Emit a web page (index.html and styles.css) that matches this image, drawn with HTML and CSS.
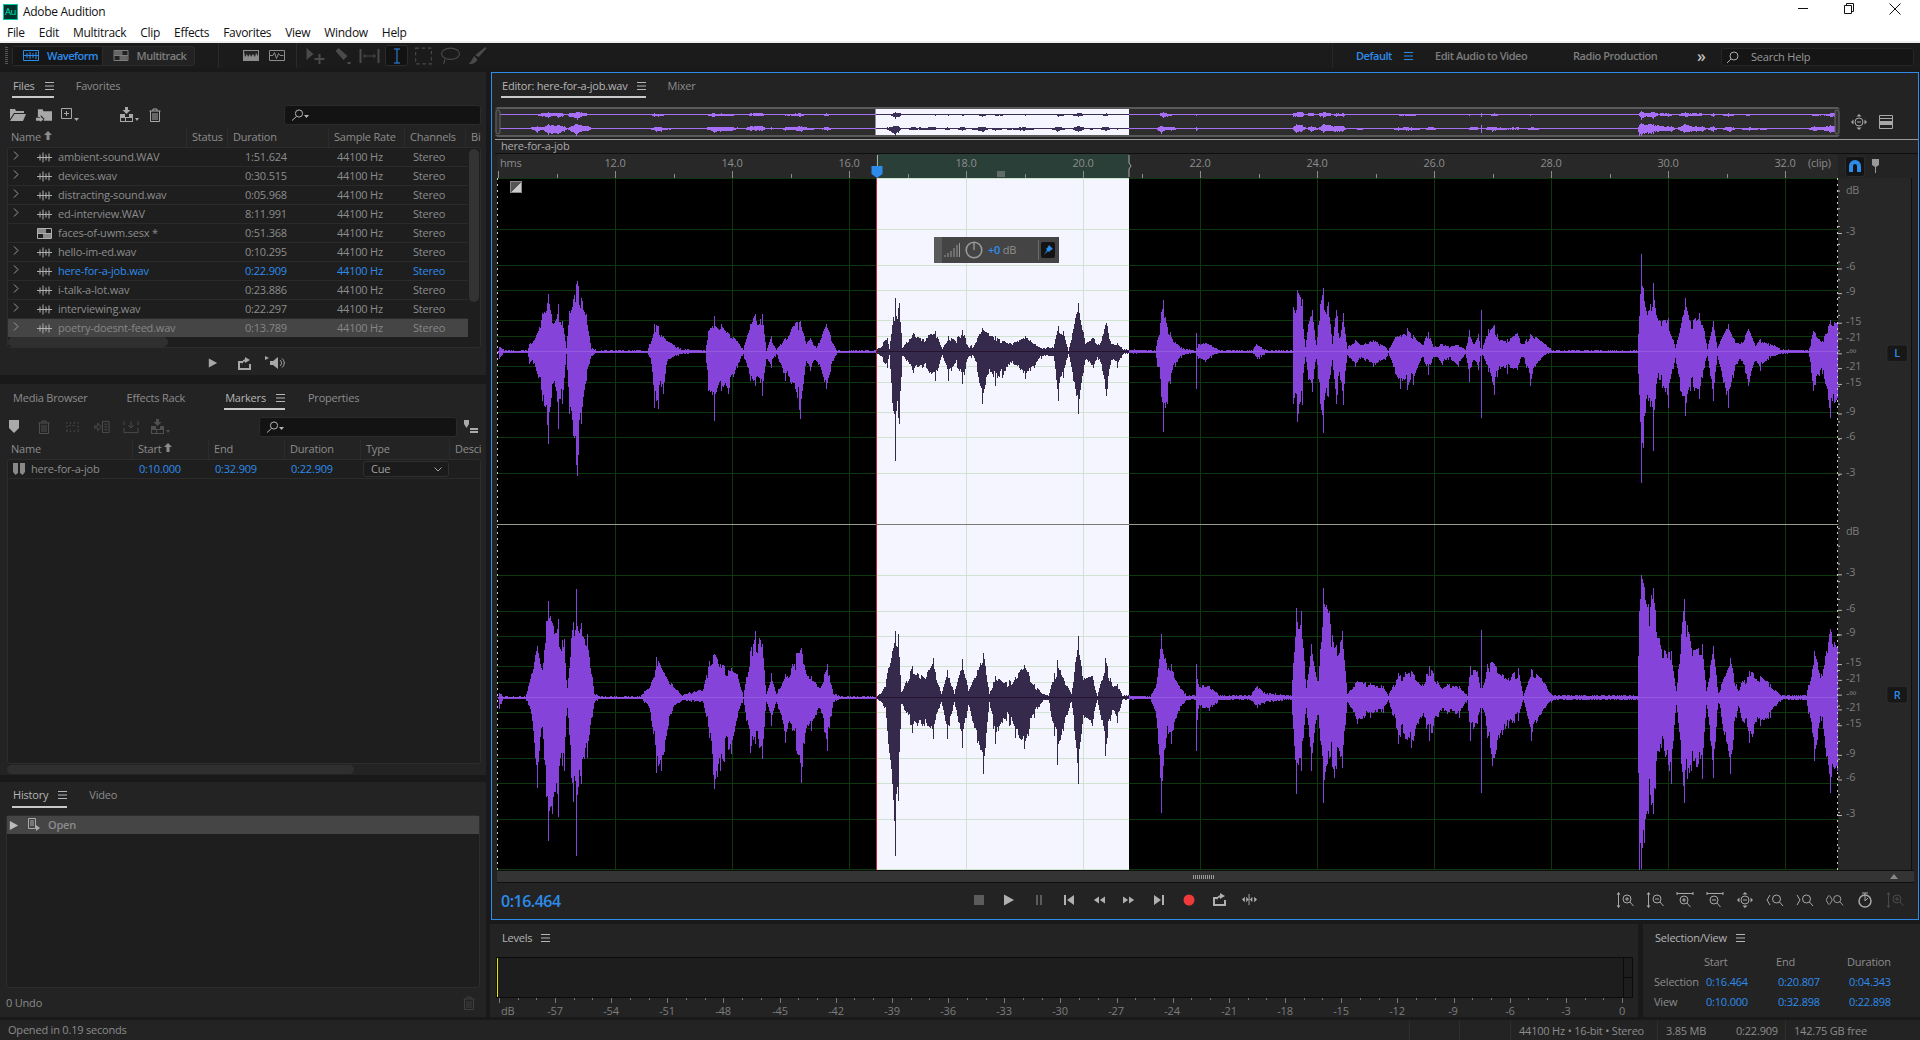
FILE: index.html
```html
<!DOCTYPE html>
<html lang="en">
<head>
<meta charset="utf-8">
<title>Adobe Audition</title>
<link rel="stylesheet" href="styles.css">
</head>
<body>
<svg class="defs" width="0" height="0" aria-hidden="true">
  <symbol id="i-wave" viewBox="0 0 15 11"><path d="M0 5.5h15M3 2.5v6M6 .5v10M9 2.5v6M12 1.5v8" fill="none" stroke="currentColor"/></symbol>
  <symbol id="i-session" viewBox="0 0 15 11"><path d="M.5 .5h14v10H.5zM.5 5.5h14" fill="none" stroke="currentColor"/><path d="M1 1h8v4H1zM6 6h8v4H6z" fill="currentColor" opacity=".75"/></symbol>
  <symbol id="i-chev" viewBox="0 0 6 9"><path d="M1 .5l4 4-4 4" fill="none" stroke="currentColor"/></symbol>
  <symbol id="i-menu" viewBox="0 0 9 8"><path d="M0 .5h9M0 4h9M0 7.5h9" stroke="currentColor" fill="none"/></symbol>
  <symbol id="i-up" viewBox="0 0 8 9"><path d="M4 0l4 4H5.5v5h-3V4H0z" fill="currentColor"/></symbol>
  <symbol id="i-search" viewBox="0 0 18 12"><circle cx="8" cy="4.5" r="3.6" fill="none" stroke="currentColor"/><path d="M5.5 7.5L1 11.5" stroke="currentColor" fill="none"/><path d="M13 6h5l-2.500 3z" fill="currentColor"/></symbol>
  <symbol id="i-folder" viewBox="0 0 16 14"><path d="M0 1h5l1 2h8v2H4L0 11zM4.500 6H16l-3 7H0z" fill="currentColor"/></symbol>
  <symbol id="i-import" viewBox="0 0 17 14"><path d="M2 1h5l1 2h9v10H8l1-2-4-4v2H2z" fill="currentColor"/><path d="M0 10h4V8l4 3.500L4 15v-2H0z" fill="currentColor"/></symbol>
  <symbol id="i-new" viewBox="0 0 18 14"><path d="M.5 .5h10v10H.5zM5.500 3v5M3 5.500h5" fill="none" stroke="currentColor"/><path d="M13 10h5l-2.500 3z" fill="currentColor"/></symbol>
  <symbol id="i-tomt" viewBox="0 0 20 16"><path d="M6 0h3v3h2.500L7.500 7l-4-4H6zM1 7h5v3h4V7h4v8H1zM2 11h4v3H2zM7 11h6v3H7z" fill="currentColor" fill-rule="evenodd"/><path d="M16 11h4l-2 3z" fill="currentColor"/></symbol>
  <symbol id="i-trash" viewBox="0 0 12 14"><path d="M.5 3h11M4 3V1h4v2M1.500 3v10.500h9V3M4 5v7M6 5v7M8 5v7" fill="none" stroke="currentColor"/></symbol>
  <symbol id="i-play" viewBox="0 0 12 12"><path d="M1 .5L11 6 1 11.500z" fill="currentColor"/></symbol>
  <symbol id="i-out" viewBox="0 0 15 13"><path d="M1 4h5v2H3v5h9V7h2v6H1z" fill="currentColor"/><path d="M8 0l5 3-5 3V4.500C6 4.500 5 6 5 8c-.5-3 .5-5.500 3-5.500z" fill="currentColor"/></symbol>
  <symbol id="i-speak" viewBox="0 0 21 14"><path d="M0 0l4 2-4 2zM5 5h3l5-4v12l-5-4H5z" fill="currentColor"/><path d="M15 4c2 2 2 4 0 6M17 2.500c3 3 3 6 0 9" fill="none" stroke="currentColor"/></symbol>
  <symbol id="i-pin" viewBox="0 0 11 14"><path d="M0 0h10v8l-5 5-5-5z" fill="currentColor"/></symbol>
  <symbol id="i-mk2" viewBox="0 0 14 14"><path d="M1 1v2M5 1v2M9 1v2M13 1v2M1 5v2M1 9v3M13 5v2M13 9v3M5 10v2M9 10v2M3 5h2M7 5h2" fill="none" stroke="currentColor"/></symbol>
  <symbol id="i-mk3" viewBox="0 0 17 14"><path d="M0 6h4V3l4 4-4 4V8H0zM9 1h7v12H9zM11 4h3M11 7h3M11 10h3" fill="none" stroke="currentColor"/></symbol>
  <symbol id="i-mk4" viewBox="0 0 17 14"><path d="M1 1v4M16 1v4M1 13h15M1 8v5M16 8v5M8.500 1v6M5.500 5l3 3 3-3" fill="none" stroke="currentColor"/></symbol>
  <symbol id="i-list" viewBox="0 0 14 14"><path d="M0 0h5v4L2.500 8 0 4z" fill="currentColor"/><path d="M6 8h8v2H6zM6 11h8v2H6z" fill="currentColor"/></symbol>
  <symbol id="i-mark" viewBox="0 0 12 12"><path d="M0 0h5v10L2.500 12 0 9zM7 0h5v9l-2.500 3L7 10z" fill="currentColor"/></symbol>
  <symbol id="i-hist" viewBox="0 0 12 14"><path d="M.5 .5h7v10h-7zM2 3h4M2 5h4M2 7h4" fill="none" stroke="currentColor"/><path d="M8 7l4 3-4 3z" fill="currentColor"/></symbol>
  <symbol id="i-stop" viewBox="0 0 12 12"><path d="M1 1h10v10H1z" fill="currentColor"/></symbol>
  <symbol id="i-pause" viewBox="0 0 12 12"><path d="M3 1h2v10H3zM7 1h2v10H7z" fill="currentColor"/></symbol>
  <symbol id="i-prev" viewBox="0 0 12 12"><path d="M1 1h2v10H1zM11 1v10L4 6z" fill="currentColor"/></symbol>
  <symbol id="i-next" viewBox="0 0 12 12"><path d="M9 1h2v10H9zM1 1v10l7-5z" fill="currentColor"/></symbol>
  <symbol id="i-rew" viewBox="0 0 14 12"><path d="M7 2v8L1 6zM14 2v8L8 6z" fill="currentColor"/></symbol>
  <symbol id="i-ff" viewBox="0 0 14 12"><path d="M0 2v8l6-4zM7 2v8l6-4z" fill="currentColor"/></symbol>
  <symbol id="i-rec" viewBox="0 0 12 12"><circle cx="6" cy="6" r="5.500" fill="currentColor"/></symbol>
  <symbol id="i-skip" viewBox="0 0 16 12"><path d="M3 3L0 6l3 3zM13 3l3 3-3 3zM7 0h1v12H7zM4.500 3v6L7 6zM11 3v6L8.500 6z" fill="currentColor"/></symbol>
  <symbol id="i-zinv" viewBox="0 0 18 16"><path d="M2.500 0l2 2.500h-1.500v11h1.500l-2 2.500-2-2.500H2v-11H.5z" fill="currentColor"/><circle cx="11" cy="7" r="4" fill="none" stroke="currentColor"/><path d="M14 10l3.500 4M9 7h4M11 5v4" stroke="currentColor" fill="none"/></symbol>
  <symbol id="i-zoutv" viewBox="0 0 18 16"><path d="M2.500 0l2 2.500h-1.500v11h1.500l-2 2.500-2-2.500H2v-11H.5z" fill="currentColor"/><circle cx="11" cy="7" r="4" fill="none" stroke="currentColor"/><path d="M14 10l3.500 4M9 7h4" stroke="currentColor" fill="none"/></symbol>
  <symbol id="i-zinh" viewBox="0 0 18 16"><path d="M1 1.500h16M1 0v3M17 0v3" stroke="currentColor" fill="none"/><circle cx="8" cy="8" r="4" fill="none" stroke="currentColor"/><path d="M11 11l3.500 4M6 8h4M8 6v4" stroke="currentColor" fill="none"/></symbol>
  <symbol id="i-zouth" viewBox="0 0 18 16"><path d="M1 1.500h16M1 0v3M17 0v3" stroke="currentColor" fill="none"/><circle cx="8" cy="8" r="4" fill="none" stroke="currentColor"/><path d="M11 11l3.500 4M6 8h4" stroke="currentColor" fill="none"/></symbol>
  <symbol id="i-zall" viewBox="0 0 18 16"><path d="M9 0l2.500 2.500h-5zM9 16l-2.500-2.500h5zM1 8l2.500-2.500v5zM17 8l-2.500-2.500v5z" fill="currentColor"/><circle cx="9" cy="8" r="4" fill="none" stroke="currentColor"/><path d="M7 8h4" stroke="currentColor" fill="none"/></symbol>
  <symbol id="i-zl" viewBox="0 0 18 16"><path d="M4 3L1 8l3 5" stroke="currentColor" fill="none"/><circle cx="10.500" cy="7" r="4" fill="none" stroke="currentColor"/><path d="M13.500 10l3.500 4" stroke="currentColor" fill="none"/></symbol>
  <symbol id="i-zr" viewBox="0 0 18 16"><path d="M1 3l3 5-3 5" stroke="currentColor" fill="none"/><circle cx="10.500" cy="7" r="4" fill="none" stroke="currentColor"/><path d="M13.500 10l3.500 4" stroke="currentColor" fill="none"/></symbol>
  <symbol id="i-zlr" viewBox="0 0 20 16"><path d="M3 3L0 8l3 5M4 3l3 5-3 5" stroke="currentColor" fill="none"/><circle cx="12.500" cy="7" r="4" fill="none" stroke="currentColor"/><path d="M15.500 10l3.500 4" stroke="currentColor" fill="none"/></symbol>
  <symbol id="i-zt" viewBox="0 0 16 16"><circle cx="8" cy="9" r="6" fill="none" stroke="currentColor" stroke-width="1.500"/><path d="M8 9V1M5 1h6M8 9l3-3" stroke="currentColor" fill="none"/></symbol>
  <symbol id="i-layers" viewBox="0 0 14 14"><path d="M.5 .5h13v13H.5zM.5 3.500h13M.5 6.500h13M.5 9.500h13" fill="none" stroke="currentColor"/><path d="M1 7h12v2H1z" fill="currentColor"/></symbol>
  <symbol id="i-magnet" viewBox="0 0 12 12"><path d="M0 6a6 6 0 0 1 12 0v6H8V6a2 2 0 0 0-4 0v6H0z" fill="currentColor"/></symbol>
  <symbol id="i-marker" viewBox="0 0 7 14"><path d="M0 0h7v6L4 8v6H3V8L0 6z" fill="currentColor"/></symbol>
</svg>

<header class="win">
  <div class="title-row">
    <span class="au-logo">Au</span>
    <span class="app-name">Adobe Audition</span>
    <div class="win-btns">
      <svg class="win-btn" viewBox="0 0 46 16"><path d="M18 7.500h10" stroke="#111" fill="none"/></svg>
      <svg class="win-btn" viewBox="0 0 46 16"><path d="M18.500 4.500h7v8h-7zM20.500 4.500v-2h7v8h-2" stroke="#111" fill="none"/></svg>
      <svg class="win-btn" viewBox="0 0 46 16"><path d="M17.500 2.500l11 11M28.500 2.500l-11 11" stroke="#111" fill="none"/></svg>
    </div>
  </div>
  <nav class="menu-row">
    <span>File</span><span>Edit</span><span>Multitrack</span><span>Clip</span><span>Effects</span><span>Favorites</span><span>View</span><span>Window</span><span>Help</span>
  </nav>
</header>

<div class="topbar">
  <span class="grip"></span>
  <div class="seg">
    <div class="seg-item seg-on"><svg class="ti-wave" viewBox="0 0 16 11"><path d="M.5 .5h15v10H.5zM.5 5.500h15M4 3v5M7 2v7M10 3v5M13 2v7" fill="none" stroke="currentColor"/></svg><span>Waveform</span></div>
    <div class="seg-item"><svg class="ti-wave" viewBox="0 0 16 11"><use href="#i-session"/></svg><span>Multitrack</span></div>
  </div>
  <span class="vsep first"></span>
  <div class="tool-set view-set">
    <svg class="ti-view" viewBox="0 0 16 11"><path d="M0 0h16v11H0z" fill="#8c8c8c"/><path d="M1 1h14v5l-2-3-1 4-2-3-2 3-1-3-2 3-1-3-2 3z" fill="#222"/></svg>
    <svg class="ti-view" viewBox="0 0 16 11"><path d="M.5 .5h15v10H.5zM1 5.500h3l1.500-3 2 6 2-5 1.500 2h3.500" fill="none" stroke="#8c8c8c"/></svg>
  </div>
  <span class="vsep"></span>
  <div class="tool-set tools">
    <svg class="ti" viewBox="0 0 20 18"><path d="M1 1l7 6-7 6z" fill="#4a4a4a"/><path d="M14 7v10M9 12h10" stroke="#4a4a4a" stroke-width="2"/></svg>
    <svg class="ti" viewBox="0 0 18 18"><path d="M5 1l9 8-4 4-8-9zM14 15h3v2h-3z" fill="#4a4a4a"/></svg>
    <svg class="ti" viewBox="0 0 20 18"><path d="M1 2v14M19 2v14" stroke="#4a4a4a" stroke-width="2"/><path d="M4 9h12M6 7L4 9l2 2M14 7l2 2-2 2" stroke="#4a4a4a" fill="none"/></svg>
    <span class="ti-chip"><svg viewBox="0 0 8 16"><path d="M1 1h6M4 1v14M1 15h6" stroke="#2d8ceb" fill="none"/></svg></span>
    <svg class="ti" viewBox="0 0 16 16"><path d="M1 1h14v14H1z" fill="none" stroke="#4a4a4a" stroke-dasharray="3 2.500"/></svg>
    <svg class="ti" viewBox="0 0 18 16"><ellipse cx="9" cy="6" rx="8" ry="5" fill="none" stroke="#4a4a4a"/><path d="M4 11l-1 4" stroke="#4a4a4a"/></svg>
    <svg class="ti" viewBox="0 0 16 16"><path d="M15 0l1 1-7 8-3-2zM5 8l3 3c-2 4-5 4-8 4 2-1 3-4 5-7z" fill="#4a4a4a"/></svg>
  </div>
  <div class="workspace">
    <div class="ws-default"><span>Default</span><svg class="menu-ic" viewBox="0 0 9 8"><use href="#i-menu"/></svg></div>
    <span class="ws-edit">Edit Audio to Video</span>
    <span class="ws-radio">Radio Production</span>
    <span class="ws-more">»</span>
    <div class="help-search"><svg class="help-ic" viewBox="0 0 12 12"><circle cx="7" cy="5" r="4" fill="none" stroke="#aaa"/><path d="M4 8L0 12" stroke="#aaa"/></svg><span>Search Help</span></div>
  </div>
</div>

<main class="main">
  <div class="left">
    <section class="panel files">
      <div class="tabs"><div class="tab on"><span>Files</span><svg class="menu-ic" viewBox="0 0 9 8"><use href="#i-menu"/></svg></div><div class="tab">Favorites</div></div>
      <div class="files-tools">
        <span class="tool"><svg class="i16" viewBox="0 0 16 14"><use href="#i-folder"/></svg></span>
        <span class="tool"><svg class="i16" viewBox="0 0 17 14"><use href="#i-import"/></svg></span>
        <span class="tool"><svg class="i18" viewBox="0 0 18 14"><use href="#i-new"/></svg></span>
        <span class="tool push"><svg class="i20" viewBox="0 0 20 16"><use href="#i-tomt"/></svg></span>
        <span class="tool"><svg class="i12" viewBox="0 0 12 14"><use href="#i-trash"/></svg></span>
        <div class="search"><svg class="i-s" viewBox="0 0 18 12"><use href="#i-search"/></svg></div>
      </div>
      <div class="thead fgrid">
        <span class="th"><span>Name</span><svg class="sort" viewBox="0 0 8 9"><use href="#i-up"/></svg></span><span class="th">Status</span><span class="th">Duration</span><span class="th">Sample Rate</span><span class="th">Channels</span><span class="th">Bi</span>
      </div>
      <div class="listbox">
        <div class="list-body">
          <div class="rows">
            <div class="row fgrid"><span class="cname"><svg class="chev" viewBox="0 0 6 9"><use href="#i-chev"/></svg><svg class="ficon" viewBox="0 0 15 11"><use href="#i-wave"/></svg>ambient-sound.WAV</span><span></span><span class="cd">1:51.624</span><span class="cr">44100 Hz</span><span class="cr">Stereo</span></div>
            <div class="row fgrid"><span class="cname"><svg class="chev" viewBox="0 0 6 9"><use href="#i-chev"/></svg><svg class="ficon" viewBox="0 0 15 11"><use href="#i-wave"/></svg>devices.wav</span><span></span><span class="cd">0:30.515</span><span class="cr">44100 Hz</span><span class="cr">Stereo</span></div>
            <div class="row fgrid"><span class="cname"><svg class="chev" viewBox="0 0 6 9"><use href="#i-chev"/></svg><svg class="ficon" viewBox="0 0 15 11"><use href="#i-wave"/></svg>distracting-sound.wav</span><span></span><span class="cd">0:05.968</span><span class="cr">44100 Hz</span><span class="cr">Stereo</span></div>
            <div class="row fgrid"><span class="cname"><svg class="chev" viewBox="0 0 6 9"><use href="#i-chev"/></svg><svg class="ficon" viewBox="0 0 15 11"><use href="#i-wave"/></svg>ed-interview.WAV</span><span></span><span class="cd">8:11.991</span><span class="cr">44100 Hz</span><span class="cr">Stereo</span></div>
            <div class="row fgrid"><span class="cname"><span class="chev"></span><svg class="ficon" viewBox="0 0 15 11"><use href="#i-session"/></svg>faces-of-uwm.sesx *</span><span></span><span class="cd">0:51.368</span><span class="cr">44100 Hz</span><span class="cr">Stereo</span></div>
            <div class="row fgrid"><span class="cname"><svg class="chev" viewBox="0 0 6 9"><use href="#i-chev"/></svg><svg class="ficon" viewBox="0 0 15 11"><use href="#i-wave"/></svg>hello-im-ed.wav</span><span></span><span class="cd">0:10.295</span><span class="cr">44100 Hz</span><span class="cr">Stereo</span></div>
            <div class="row fgrid active"><span class="cname"><svg class="chev" viewBox="0 0 6 9"><use href="#i-chev"/></svg><svg class="ficon" viewBox="0 0 15 11"><use href="#i-wave"/></svg>here-for-a-job.wav</span><span></span><span class="cd">0:22.909</span><span class="cr">44100 Hz</span><span class="cr">Stereo</span></div>
            <div class="row fgrid"><span class="cname"><svg class="chev" viewBox="0 0 6 9"><use href="#i-chev"/></svg><svg class="ficon" viewBox="0 0 15 11"><use href="#i-wave"/></svg>i-talk-a-lot.wav</span><span></span><span class="cd">0:23.886</span><span class="cr">44100 Hz</span><span class="cr">Stereo</span></div>
            <div class="row fgrid"><span class="cname"><svg class="chev" viewBox="0 0 6 9"><use href="#i-chev"/></svg><svg class="ficon" viewBox="0 0 15 11"><use href="#i-wave"/></svg>interviewing.wav</span><span></span><span class="cd">0:22.297</span><span class="cr">44100 Hz</span><span class="cr">Stereo</span></div>
            <div class="row fgrid hl"><span class="cname"><svg class="chev" viewBox="0 0 6 9"><use href="#i-chev"/></svg><svg class="ficon" viewBox="0 0 15 11"><use href="#i-wave"/></svg>poetry-doesnt-feed.wav</span><span></span><span class="cd">0:13.789</span><span class="cr">44100 Hz</span><span class="cr">Stereo</span></div>
          </div>
          <div class="vscroll"></div>
        </div>
        <div class="hscroll"></div>
      </div>
      <div class="file-play">
        <svg class="i10" viewBox="0 0 12 12"><use href="#i-play"/></svg>
        <svg class="i15" viewBox="0 0 15 13"><use href="#i-out"/></svg>
        <svg class="i21" viewBox="0 0 21 14"><use href="#i-speak"/></svg>
      </div>
    </section>

    <section class="panel markers">
      <div class="tabs mk-tabs"><div class="tab">Media Browser</div><div class="tab">Effects Rack</div><div class="tab on"><span>Markers</span><svg class="menu-ic" viewBox="0 0 9 8"><use href="#i-menu"/></svg></div><div class="tab">Properties</div></div>
      <div class="mk-tools">
        <span class="mtool bright"><svg class="i-mk" viewBox="0 0 11 14"><use href="#i-pin"/></svg></span>
        <span class="mtool"><svg class="i12" viewBox="0 0 12 14"><use href="#i-trash"/></svg></span>
        <span class="mtool"><svg class="i15" viewBox="0 0 14 14"><use href="#i-mk2"/></svg></span>
        <span class="mtool"><svg class="i16" viewBox="0 0 17 14"><use href="#i-mk3"/></svg></span>
        <span class="mtool"><svg class="i16" viewBox="0 0 17 14"><use href="#i-mk4"/></svg></span>
        <span class="mtool"><svg class="i20" viewBox="0 0 20 16"><use href="#i-tomt"/></svg></span>
        <div class="search mk-search"><svg class="i-s" viewBox="0 0 18 12"><use href="#i-search"/></svg></div>
        <svg class="i-l" viewBox="0 0 14 14"><use href="#i-list"/></svg>
      </div>
      <div class="thead mgrid">
        <span class="th">Name</span><span class="th"><span>Start</span><svg class="sort" viewBox="0 0 8 9"><use href="#i-up"/></svg></span><span class="th">End</span><span class="th">Duration</span><span class="th">Type</span><span class="th">Desci</span>
      </div>
      <div class="listbox mk-list">
        <div class="mrow mgrid">
          <span class="mname"><svg class="i-mark" viewBox="0 0 12 12"><use href="#i-mark"/></svg>here-for-a-job</span>
          <span class="blue">0:10.000</span><span class="blue">0:32.909</span><span class="blue">0:22.909</span>
          <span class="dropdown"><span>Cue</span><svg class="dd-ic" viewBox="0 0 8 5"><path d="M.5 .5L4 4 7.500 .5" fill="none" stroke="currentColor"/></svg></span>
        </div>
      </div>
      <div class="mk-scroll"></div>
    </section>

    <section class="panel history">
      <div class="tabs hi-tabs"><div class="tab on"><span>History</span><svg class="menu-ic" viewBox="0 0 9 8"><use href="#i-menu"/></svg></div><div class="tab">Video</div></div>
      <div class="listbox hi-list">
        <div class="hi-row">
          <svg class="hi-play" viewBox="0 0 12 12"><use href="#i-play"/></svg>
          <svg class="hi-ic" viewBox="0 0 12 14"><use href="#i-hist"/></svg>
          <span>Open</span>
        </div>
      </div>
      <div class="hi-foot"><span>0 Undo</span><svg class="i12 dim" viewBox="0 0 12 14"><use href="#i-trash"/></svg></div>
    </section>
  </div>

  <div class="right">
    <section class="editor">
      <div class="ed-tabs"><div class="tab on"><span>Editor: here-for-a-job.wav</span><svg class="menu-ic" viewBox="0 0 9 8"><use href="#i-menu"/></svg></div><div class="tab">Mixer</div></div>
      <div class="ov-row">
        <svg id="overview" class="overview" width="1345" height="30" viewBox="0 0 1345 30"></svg>
        <svg class="ov-ic" viewBox="0 0 18 16"><use href="#i-zall"/></svg>
        <svg class="ov-ic2" viewBox="0 0 14 14"><use href="#i-layers"/></svg>
      </div>
      <div class="label-bar">here-for-a-job</div>
      <div class="ruler-row">
        <svg class="ruler" width="1341" height="24" viewBox="0 0 1341 24">
          <rect x="379.500" width="252.500" height="24" fill="#2a3f38"/>
          <path id="ruler-ticks" stroke="#8c8c8c" fill="none"/>
          <text class="rt" x="3" y="13">hms</text>
          <text class="rt m" x="118" y="13">12.0</text><text class="rt m" x="235" y="13">14.0</text><text class="rt m" x="352" y="13">16.0</text><text class="rt m" x="469" y="13">18.0</text><text class="rt m" x="586" y="13">20.0</text><text class="rt m" x="703" y="13">22.0</text><text class="rt m" x="820" y="13">24.0</text><text class="rt m" x="937" y="13">26.0</text><text class="rt m" x="1054" y="13">28.0</text><text class="rt m" x="1171" y="13">30.0</text><text class="rt m" x="1288" y="13">32.0</text>
          <text class="rt" x="1311" y="13">(clip)</text>
          <path d="M380.500 1v11M632 1v8l2 3-2 3v8" stroke="#aaa" fill="none"/>
          <path d="M501 17v6M503 17v6M505 17v6M507 17v6" stroke="#999" fill="none"/>
          <path d="M374.500 12h11v8l-5.500 4-5.500-4z" fill="#2d8ceb"/>
        </svg>
        <span class="snap"><svg viewBox="0 0 12 12"><use href="#i-magnet"/></svg></span>
        <svg class="pin" viewBox="0 0 7 14"><use href="#i-marker"/></svg>
      </div>
      <div class="wave-row">
        <div class="wave-wrap">
          <svg id="wave" class="wave" width="1341" height="692" viewBox="0 0 1341 692"></svg>
          <span class="corner"></span>
          <div class="hud">
            <span class="hud-grip"></span>
            <svg class="hud-bars" viewBox="0 0 16 16"><path d="M1 15v-2M4 15v-4M7 15V9M10 15V6M13 15V3M15.500 15V1" stroke="#999" fill="none"/></svg>
            <svg class="hud-knob" viewBox="0 0 18 18"><circle cx="9" cy="9" r="7.800" fill="none" stroke="#999" stroke-width="1.600"/><path d="M9 2v7" stroke="#999" stroke-width="1.400"/></svg>
            <span class="hud-val"><b>+0</b> dB</span>
            <span class="hud-sep"></span>
            <span class="hud-pin"><svg viewBox="0 0 10 10"><path d="M6 0l4 4-2 1-2 2-1-1-4 4 3-5-1-1 2-2z" fill="#2d8ceb"/></svg></span>
          </div>
        </div>
        <svg class="db" width="74" height="692" viewBox="0 0 74 692">
          <path id="db-ticks" stroke="#bbb" fill="none"/>
          <text class="dbt" x="8" y="11">dB</text>
          <text class="dbt" x="8" y="53">-3</text><text class="dbt" x="8" y="89">-6</text><text class="dbt" x="8" y="114">-9</text><text class="dbt" x="8" y="144">-15</text><text class="dbt" x="8" y="160">-21</text><text class="dbt" x="8" y="175">-∞</text><text class="dbt" x="8" y="190">-21</text><text class="dbt" x="8" y="206">-15</text><text class="dbt" x="8" y="236">-9</text><text class="dbt" x="8" y="261">-6</text><text class="dbt" x="8" y="297">-3</text>
          <text class="dbt" x="8" y="357">dB</text>
          <text class="dbt" x="8" y="399">-3</text><text class="dbt" x="8" y="435">-6</text><text class="dbt" x="8" y="460">-9</text><text class="dbt" x="8" y="490">-15</text><text class="dbt" x="8" y="506">-21</text><text class="dbt" x="8" y="521">-∞</text><text class="dbt" x="8" y="536">-21</text><text class="dbt" x="8" y="552">-15</text><text class="dbt" x="8" y="582">-9</text><text class="dbt" x="8" y="607">-6</text><text class="dbt" x="8" y="643">-3</text>
          <rect x="49.500" y="164.500" width="21" height="17" rx="3" fill="#171717" stroke="#2f2f2f"/><text class="chan" x="60" y="177">L</text>
          <rect x="49.500" y="510.500" width="21" height="17" rx="3" fill="#171717" stroke="#2f2f2f"/><text class="chan" x="60" y="523">R</text>
        </svg>
      </div>
      <div class="wscroll"><span class="wthumb"></span><svg class="wup" viewBox="0 0 8 5"><path d="M4 0l4 5H0z" fill="#888"/></svg></div>
      <div class="transport">
        <span class="timecode">0:16.464</span>
        <div class="tp-group">
          <span class="tp dim2"><svg viewBox="0 0 12 12"><use href="#i-stop"/></svg></span>
          <span class="tp"><svg viewBox="0 0 12 12"><use href="#i-play"/></svg></span>
          <span class="tp dim2"><svg viewBox="0 0 12 12"><use href="#i-pause"/></svg></span>
          <span class="tp"><svg viewBox="0 0 12 12"><use href="#i-prev"/></svg></span>
          <span class="tp"><svg viewBox="0 0 14 12"><use href="#i-rew"/></svg></span>
          <span class="tp"><svg viewBox="0 0 14 12"><use href="#i-ff"/></svg></span>
          <span class="tp"><svg viewBox="0 0 12 12"><use href="#i-next"/></svg></span>
          <span class="tp rec"><svg viewBox="0 0 12 12"><use href="#i-rec"/></svg></span>
          <span class="tp wide"><svg viewBox="0 0 15 13"><use href="#i-out"/></svg></span>
          <span class="tp wide"><svg viewBox="0 0 16 12"><use href="#i-skip"/></svg></span>
        </div>
        <div class="tp-group zooms">
          <span class="zp"><svg viewBox="0 0 18 16"><use href="#i-zinv"/></svg></span>
          <span class="zp"><svg viewBox="0 0 18 16"><use href="#i-zoutv"/></svg></span>
          <span class="zp"><svg viewBox="0 0 18 16"><use href="#i-zinh"/></svg></span>
          <span class="zp"><svg viewBox="0 0 18 16"><use href="#i-zouth"/></svg></span>
          <span class="zp"><svg viewBox="0 0 18 16"><use href="#i-zall"/></svg></span>
          <span class="zp"><svg viewBox="0 0 18 16"><use href="#i-zl"/></svg></span>
          <span class="zp"><svg viewBox="0 0 18 16"><use href="#i-zr"/></svg></span>
          <span class="zp"><svg viewBox="0 0 20 16"><use href="#i-zlr"/></svg></span>
          <span class="zp"><svg viewBox="0 0 16 16"><use href="#i-zt"/></svg></span>
          <span class="zp dim3"><svg viewBox="0 0 18 16"><use href="#i-zinv"/></svg></span>
        </div>
      </div>
    </section>

    <div class="bottom">
      <section class="panel levels">
        <div class="lv-title"><span>Levels</span><svg class="menu-ic" viewBox="0 0 9 8"><use href="#i-menu"/></svg></div>
        <div class="meter"><div class="meter-main"></div><div class="meter-clip"><span></span><span></span></div></div>
        <svg class="lv-scale" width="1136" height="20" viewBox="0 0 1136 20">
          <path id="lv-ticks" stroke="#777" fill="none"/>
          <text class="lv" x="5" y="17">dB</text>
          <text class="lv m" x="59" y="17">-57</text><text class="lv m" x="115" y="17">-54</text><text class="lv m" x="171" y="17">-51</text><text class="lv m" x="227" y="17">-48</text><text class="lv m" x="284" y="17">-45</text><text class="lv m" x="340" y="17">-42</text><text class="lv m" x="396" y="17">-39</text><text class="lv m" x="452" y="17">-36</text><text class="lv m" x="508" y="17">-33</text><text class="lv m" x="564" y="17">-30</text><text class="lv m" x="620" y="17">-27</text><text class="lv m" x="676" y="17">-24</text><text class="lv m" x="733" y="17">-21</text><text class="lv m" x="789" y="17">-18</text><text class="lv m" x="845" y="17">-15</text><text class="lv m" x="901" y="17">-12</text><text class="lv m" x="957" y="17">-9</text><text class="lv m" x="1014" y="17">-6</text><text class="lv m" x="1070" y="17">-3</text><text class="lv m" x="1126" y="17">0</text>
        </svg>
      </section>
      <section class="panel selview">
        <div class="lv-title sv-title"><span>Selection/View</span><svg class="menu-ic" viewBox="0 0 9 8"><use href="#i-menu"/></svg></div>
        <div class="sv-grid">
          <span></span><span>Start</span><span>End</span><span>Duration</span>
          <span>Selection</span><span class="blue v">0:16.464</span><span class="blue v">0:20.807</span><span class="blue v">0:04.343</span>
          <span>View</span><span class="blue v">0:10.000</span><span class="blue v">0:32.898</span><span class="blue v">0:22.898</span>
        </div>
      </section>
    </div>
  </div>
</main>

<footer class="status">
  <span class="st-msg">Opened in 0.19 seconds</span>
  <div class="st-cells">
    <span class="st c1"></span><span class="st c2"></span><span class="st c3">44100 Hz • 16-bit • Stereo</span><span class="st c4">3.85 MB</span><span class="st c5">0:22.909</span><span class="st c6">142.75 GB free</span>
  </div>
</footer>
<script src="wave.js"></script>
</body>
</html>
```

FILE: styles.css
```css
* { box-sizing: border-box; }
html, body { margin: 0; padding: 0; }
body {
  width: 1920px; height: 1040px; overflow: hidden; background: #191919;
  font: 11px/1.2 "Open Sans", "Noto Sans", sans-serif; color: #8c8c8c; letter-spacing: -.2px;
}
svg { display: block; flex: none; }
.defs { position: absolute; }
.blue { color: #2d8ceb; }

/* window chrome */
.win { height: 43px; background: #fff; color: #111; border-bottom: 2px solid #efefef; font-size: 12px; letter-spacing: -.3px; }
.title-row { display: flex; align-items: center; height: 24px; padding-left: 3px; }
.au-logo { width: 15px; height: 16px; margin-top: -1px; background: #00332c; border: 1px solid #00c9a7; color: #00e4bb; font-size: 9.500px; line-height: 14px; text-align: center; }
.app-name { margin-left: 5px; }
.win-btns { display: flex; margin-left: auto; margin-right: 2px; }
.win-btn { width: 46px; height: 16px; margin-top: -7px; }
.menu-row { display: flex; height: 17px; padding-left: 7px; gap: 14px; align-items: center; margin-top: 1px; }

.topbar { display: flex; align-items: center; height: 25px; background: #1b1b1b; }
.grip { width: 3px; height: 18px; margin-left: 5px; background: repeating-linear-gradient(#555 0 1px, transparent 1px 2px); }
.seg { display: flex; width: 183px; height: 20px; margin-left: 4px; border: 1px solid #2b2b2b; border-radius: 3px; background: #222; }
.seg-item { display: flex; align-items: center; width: 92px; padding-left: 10px; gap: 8px; font-weight: 600; color: #7d7d7d; letter-spacing: -.5px; }
.seg-on { width: 90px; background: #161616; color: #2d8ceb; border-right: 1px solid #2b2b2b; }
.ti-wave { width: 16px; height: 11px; }
.vsep { width: 1px; height: 25px; margin-left: 11px; background: #2a2a2a; }
.vsep.first { margin-left: 23px; }
.tool-set { display: flex; align-items: center; }
.view-set { gap: 10px; margin-left: 24px; }
.ti-view { width: 16px; height: 11px; }
.tools { margin-left: 5px; }
.ti { width: 27px; height: 18px; }
.ti-chip { display: flex; justify-content: center; align-items: center; width: 23px; height: 21px; margin: 0 2px; border: 1px solid #2b2b2b; border-radius: 3px; background: #121212; }
.ti-chip svg { width: 8px; height: 16px; }
.workspace { display: flex; align-items: center; height: 25px; margin-left: auto; padding-left: 23px; border-left: 1px solid #262626; font-weight: 600; color: #7d7d7d; letter-spacing: -.45px; }
.ws-default { display: flex; align-items: center; gap: 12px; width: 79px; color: #2d8ceb; }
.ws-default .menu-ic { color: #2d8ceb; }
.ws-edit { width: 138px; }
.ws-radio { width: 124px; }
.ws-more { width: 20px; font-size: 16px; line-height: 18px; color: #bbb; }
.help-search { display: flex; align-items: center; width: 193px; height: 18px; margin: 2px 6px 0 4px; padding-left: 5px; background: #151515; border: 1px solid #262626; border-radius: 3px; font-weight: 400; color: #9a9a9a; gap: 12px; letter-spacing: -.2px; }
.help-ic { width: 12px; height: 12px; }

/* structure */
.main { display: flex; height: 945px; margin-top: 4px; }
.left { display: flex; flex-direction: column; width: 486px; }
.right { display: flex; flex-direction: column; width: 1430px; margin-left: 4px; }
.panel { background: #232323; }
.files { height: 303px; }
.markers { height: 391px; margin-top: 9px; }
.history { height: 235px; margin-top: 7px; }

.tabs { display: flex; height: 27px; padding-left: 12px; gap: 22px; }
.tab { display: flex; align-items: center; gap: 10px; height: 26px; padding-top: 3px; border-bottom: 2px solid transparent; }
.tab.on { color: #b5b5b5; border-bottom-color: #c8c8c8; }
.tab.on span { margin-left: 1px; }
.menu-ic { width: 9px; height: 8px; color: #b5b5b5; }

.files-tools { display: flex; align-items: center; height: 24px; margin-top: 4px; padding-left: 5px; color: #a8a8a8; }
.tool { display: flex; justify-content: center; width: 26px; }
.tool.push { margin-left: 33px; }
.i10 { width: 10px; height: 10px; }
.i12 { width: 12px; height: 14px; }
.i15 { width: 15px; height: 13px; }
.i16 { width: 16px; height: 14px; }
.i18 { width: 18px; height: 14px; }
.i20 { width: 20px; height: 16px; }
.i21 { width: 21px; height: 14px; }
.search { display: flex; align-items: center; width: 197px; height: 20px; margin-left: auto; margin-right: 5px; padding-left: 6px; background: #131313; border: 1px solid #2b2b2b; border-radius: 3px; color: #b5b5b5; }
.i-s { width: 18px; height: 12px; }

.thead { height: 20px; margin: 0 5px 0 7px; align-items: center; }
.fgrid { display: grid; grid-template-columns: 180px 41px 101px 76px 61px 1fr; }
.mgrid { display: grid; grid-template-columns: 126px 76px 76px 76px 89px 1fr; }
.th { display: flex; align-items: center; height: 100%; padding-left: 5px; gap: 3px; border-right: 1px solid #2b2b2b; white-space: nowrap; overflow: hidden; }
.th:first-child { padding-left: 4px; }
.th:last-child { border-right: 0; }
.sort { width: 8px; height: 9px; margin-top: -3px; }
.listbox { margin: 0 5px 0 7px; border: 1px solid #2d2d2d; border-radius: 3px; background: #1e1e1e; }
.list-body { display: flex; }
.rows { width: 460px; }
.row { height: 19px; align-items: center; border-bottom: 1px solid #2a2a2a; }
.row.active { color: #2d8ceb; }
.row.hl { height: 18px; background: #454545; color: #858585; border-bottom: 0; }
.cname { display: flex; align-items: center; white-space: nowrap; grid-column: 1; }
.chev { width: 6px; height: 9px; margin-left: 5px; margin-top: -3px; color: #9a9a9a; flex: none; }
.ficon { width: 15px; height: 11px; margin: 0 6px 0 18px; color: #b0b0b0; }
.cd { padding-left: 16px; }
.cr { padding-left: 7px; }
.vscroll { width: 10px; height: 153px; margin: 1px 0 0 1px; border-radius: 5px; background: #333; }
.hscroll { width: 160px; height: 10px; margin-bottom: 0; border-radius: 5px; background: #2f2f2f; }
.file-play { display: flex; align-items: center; height: 24px; margin-top: 3px; padding-left: 208px; gap: 19px; color: #a8a8a8; }
.file-play .i21 { margin-left: -6px; }

.mk-tabs { gap: 39px; padding-left: 13px; }
.mk-tabs .tab.on + .tab { margin-left: -16px; }
.mk-tools { display: flex; align-items: center; height: 24px; margin-top: 4px; color: #4f4f4f; }
.mtool { display: flex; justify-content: center; width: 29px; }
.mtool.bright { color: #aaa; }
.i-mk { width: 11px; height: 14px; }
.mk-search { width: 198px; margin-left: 85px; margin-right: 0; }
.i-l { width: 14px; height: 14px; margin-left: 7px; color: #aaa; }
.mk-tools .i-s { color: #b5b5b5; }
.mk-list { height: 305px; }
.mrow { height: 19px; margin-left: -1px; align-items: center; border-bottom: 1px solid #2a2a2a; }
.mname { display: flex; align-items: center; padding-left: 6px; gap: 6px; white-space: nowrap; }
.i-mark { width: 12px; height: 12px; color: #888; }
.mrow .blue { padding-left: 6px; }
.dropdown { display: flex; align-items: center; justify-content: space-between; width: 86px; height: 16px; margin-left: 2px; padding: 0 6px 0 7px; border: 1px solid #2f2f2f; border-radius: 3px; background: #1b1b1b; color: #a0a0a0; }
.dd-ic { width: 8px; height: 5px; }
.mk-scroll { width: 347px; height: 9px; margin: 1px 0 0 7px; border-radius: 5px; background: #2f2f2f; }

.hi-tabs { gap: 22px; height: 26px; }
.hi-tabs .tab { padding-top: 2px; }
.hi-list { height: 173px; margin: 7px 6px 0 6px; }
.hi-row { display: flex; align-items: center; height: 18px; background: #454545; font-weight: 600; color: #8c8c8c; }
.hi-play { width: 10px; height: 11px; margin-left: 2px; color: #bbb; }
.hi-ic { width: 12px; height: 14px; margin: 0 8px 0 9px; color: #aaa; }
.hi-foot { display: flex; align-items: center; justify-content: space-between; height: 29px; padding: 0 11px 0 6px; }
.dim { color: #3f3f3f; }

/* editor */
.editor { width: 1428px; height: 848px; margin-left: 1px; border: 1px solid #2d8ceb; background: #232323; }
.ed-tabs { display: flex; height: 26px; padding-left: 9px; gap: 21px; }
.ed-tabs .tab { padding-top: 2px; height: 25px; }
.ov-row { display: flex; align-items: center; height: 30px; margin-top: 8px; padding-left: 3px; }
.overview { border-radius: 3px; }
.ov-ic { width: 18px; height: 16px; margin-left: 10px; color: #a8a8a8; }
.ov-ic2 { width: 14px; height: 14px; margin-left: 11px; color: #a8a8a8; }
.label-bar { height: 15px; margin: 2px 0 0 3px; padding-left: 6px; border-top: 1px solid #9a9a9a; border-bottom: 1px solid #0e0e0e; line-height: 12px; color: #aaa; background: #242424; }
.ruler-row { display: flex; align-items: center; height: 24px; padding-left: 5px; }
.ruler { background: #282828; }
.rt { font: 11px "Open Sans", sans-serif; fill: #8c8c8c; }
.rt.m { text-anchor: middle; }
.snap { display: flex; align-items: center; justify-content: center; width: 20px; height: 21px; margin-left: 7px; background: #141414; border: 1px solid #2b2b2b; border-radius: 3px; color: #2d8ceb; }
.snap svg { width: 12px; height: 12px; }
.pin { width: 7px; height: 14px; margin-left: 7px; color: #999; }
.wave-row { display: flex; height: 692px; padding-left: 5px; }
.wave-wrap { position: relative; width: 1341px; height: 692px; }
.wave { background: #000; }
.corner { position: absolute; left: 13px; top: 3px; width: 12px; height: 12px; background: linear-gradient(135deg, #555 50%, #ccc 50%); border: 1px solid #888; }
.hud { position: absolute; left: 437px; top: 59px; display: flex; align-items: center; width: 125px; height: 26px; background: #444; color: #909090; }
.hud-grip { width: 8px; height: 26px; background: #5a5a5a; }
.hud-bars { width: 16px; height: 16px; margin-left: 2px; }
.hud-knob { width: 18px; height: 18px; margin-left: 5px; }
.hud-val { width: 50px; margin-left: 5px; }
.hud-val b { color: #2d8ceb; font-weight: 600; }
.hud-sep { width: 1px; height: 20px; margin-right: 2px; background: #6a6a6a; }
.hud-pin { display: flex; align-items: center; justify-content: center; width: 14px; height: 16px; background: #141414; border-radius: 2px; }
.hud-pin svg { width: 10px; height: 10px; }
.db { border-right: 1px solid #0e0e0e; background: #272727; }
.dbt { font: 11px "Open Sans", sans-serif; fill: #7d7d7d; }
.chan { font: 600 11px "Open Sans", sans-serif; fill: #2d8ceb; text-anchor: middle; }
.wscroll { display: flex; align-items: center; height: 13px; margin: 0 4px 0 5px; background: #343434; border-top: 1px solid #0e0e0e; border-bottom: 1px solid #0e0e0e; }
.wthumb { width: 22px; height: 4px; margin-left: 696px; background: repeating-linear-gradient(90deg, #999 0 1px, transparent 1px 2px); }
.wup { width: 8px; height: 5px; margin-left: 675px; }
.transport { display: flex; align-items: center; height: 35px; padding: 0 8px 0 9px; }
.timecode { width: 463px; font-size: 16px; font-weight: 600; letter-spacing: -.5px; color: #2d8ceb; margin-top: 2px; }
.tp-group { display: flex; color: #b0b0b0; margin-top: -2px; }
.zooms { margin-left: auto; color: #a8a8a8; }
.tp, .zp { display: flex; justify-content: center; align-items: center; width: 30px; height: 18px; }
.tp svg { width: 12px; height: 12px; }
.tp.wide svg { width: 15px; height: 13px; }
.zp svg { width: 18px; height: 16px; }
.dim2 { color: #5c5c5c; }
.dim3 { color: #4a4a4a; }
.rec { color: #f03a3a; }

/* bottom */
.bottom { display: flex; height: 93px; margin-top: 4px; }
.levels { width: 1148px; padding-left: 6px; }
.lv-title { display: flex; align-items: center; gap: 9px; height: 28px; margin-bottom: 5px; padding-left: 6px; color: #b5b5b5; }
.meter { display: flex; width: 1137px; height: 41px; background: #1d1d1d; border: 1px solid #0b0b0b; }
.meter-main { flex: 1; border-left: 1px solid #e6e600; }
.meter-clip { display: flex; flex-direction: column; width: 9px; border-left: 1px solid #0b0b0b; }
.meter-clip span { flex: 1; }
.meter-clip span + span { border-top: 1px solid #0b0b0b; }
.lv { font: 11px "Open Sans", sans-serif; fill: #7d7d7d; }
.lv.m { text-anchor: middle; }
.selview { width: 277px; margin-left: 5px; }
.sv-title { padding-left: 12px; height: 28px; margin-bottom: 0; }
.sv-grid { display: grid; grid-template-columns: 50px 72px 71px auto; grid-auto-rows: 20px; align-items: center; padding: 0 0 0 11px; }
.sv-grid .v { padding-left: 2px; }

.status { display: flex; align-items: center; justify-content: space-between; height: 20px; margin-top: 3px; padding-left: 8px; background: #232323; }
.st-cells { display: flex; height: 20px; margin-right: 48px; align-items: center; }
.st { height: 20px; line-height: 22px; border-left: 1px solid #2e2e2e; padding-left: 8px; white-space: nowrap; }
.c1 { width: 50px; } .c2 { width: 51px; } .c3 { width: 147px; } .c4 { width: 79px; } .c5 { width: 49px; padding-left: 0; border-left: 0; width: 49px; } .c6 { width: 87px; }
```

FILE: wave.js
```js
// Waveform envelopes of here-for-a-job.wav: [x, up, down] peaks in page pixels.
var L = [499,5,7,504,1,1,527,1,1,529,8,12,533,11,12,538,21,26,542,39,49,548,58,92,551,38,46,556,33,39,558,48,77,562,31,52,566,4,2,569,41,62,577,71,124,581,54,72,586,38,29,591,3,4,597,1,1,647,1,1,650,8,6,654,28,56,658,26,57,663,16,42,667,11,9,681,2,2,705,1,1,708,21,39,714,36,69,721,28,39,728,19,42,737,11,16,743,2,2,750,28,29,755,38,34,762,38,44,766,1,7,771,16,16,776,2,2,785,14,29,795,29,37,800,31,67,806,8,9,810,14,19,816,4,9,826,28,37,833,8,9,837,1,1,876,1,1,887,14,16,889,3,3,895,54,109,899,49,72,902,4,4,913,19,21,922,13,16,935,21,29,942,3,3,948,16,29,955,11,11,962,22,32,969,4,4,975,9,9,982,24,52,988,19,22,995,16,34,1002,11,26,1011,8,11,1025,16,27,1034,8,16,1042,3,4,1053,4,4,1058,26,49,1063,21,26,1068,1,2,1078,49,62,1085,8,8,1093,14,16,1098,8,8,1106,29,44,1112,8,8,1117,9,16,1123,2,2,1155,1,1,1157,12,15,1158,15,15,1161,40,45,1163,52,80,1167,25,52,1170,20,32,1175,10,15,1182,3,3,1195,1,1,1196,19,37,1197,4,4,1198,8,7,1205,9,10,1213,5,3,1220,1,1,1252,1,1,1257,7,7,1263,3,3,1268,1,1,1292,1,1,1293,45,52,1297,62,70,1302,53,53,1305,5,5,1308,28,28,1312,42,40,1316,7,7,1320,48,52,1323,64,81,1328,50,45,1332,8,8,1336,42,52,1340,15,28,1343,39,53,1347,3,3,1355,12,15,1360,7,7,1373,12,15,1385,5,8,1388,1,1,1395,15,22,1400,17,37,1407,24,38,1413,17,33,1422,7,5,1428,20,23,1433,5,5,1442,8,13,1448,6,8,1458,7,15,1465,2,2,1469,22,30,1474,8,8,1478,18,18,1480,4,4,1481,42,66,1482,3,3,1488,23,20,1494,27,43,1500,12,17,1507,13,22,1517,19,18,1523,8,5,1530,18,34,1535,15,15,1545,8,3,1552,1,1,1637,1,1,1638,18,22,1641,98,131,1643,64,96,1648,41,49,1653,69,99,1657,34,26,1662,31,36,1668,34,56,1675,4,6,1680,24,39,1685,54,64,1690,31,39,1699,39,47,1704,21,16,1707,3,4,1713,31,49,1717,4,4,1728,28,56,1733,14,26,1740,8,7,1748,23,34,1755,6,9,1760,13,19,1770,8,6,1780,2,2,1808,1,1,1813,21,39,1822,11,22,1830,32,66,1837,28,46];
var R = [499,5,11,503,1,1,525,1,1,531,24,16,537,52,90,541,30,30,548,97,143,552,75,116,558,79,119,564,59,73,567,10,10,571,60,80,576,109,158,581,75,86,587,64,60,594,4,5,600,1,1,640,1,1,647,9,6,653,20,36,656,41,75,661,30,73,672,14,13,682,2,2,703,9,5,709,37,40,714,44,91,720,34,73,731,30,56,737,24,20,743,1,1,750,47,55,755,67,46,762,54,61,766,4,4,771,25,28,776,4,4,785,24,45,792,34,33,796,45,53,801,50,85,806,24,30,811,22,33,819,10,10,827,34,53,833,4,4,840,1,1,876,1,1,880,4,3,886,19,20,895,67,158,898,64,103,901,6,6,912,32,35,924,20,28,933,40,41,941,4,4,947,28,41,954,4,4,962,39,50,968,7,7,983,45,76,989,4,4,995,22,46,1004,15,21,1015,21,40,1024,33,51,1034,14,20,1042,4,4,1048,2,2,1057,38,67,1063,20,33,1071,4,4,1078,62,86,1084,20,20,1092,22,28,1097,2,2,1105,40,58,1112,12,12,1117,14,25,1122,2,2,1150,1,1,1156,14,20,1161,64,115,1166,35,40,1171,34,46,1179,12,13,1186,2,2,1195,2,2,1196,34,53,1198,14,11,1209,12,13,1219,2,2,1250,2,2,1257,12,10,1265,4,4,1291,2,2,1296,90,96,1301,87,73,1306,10,10,1311,54,73,1318,17,17,1323,110,105,1329,87,60,1334,50,80,1342,67,70,1347,4,4,1357,17,26,1370,15,20,1383,12,15,1388,2,2,1398,25,46,1411,27,50,1421,12,20,1429,32,43,1441,10,13,1447,14,16,1459,12,20,1467,2,2,1470,32,43,1477,27,26,1480,10,10,1481,68,95,1482,10,10,1487,34,40,1492,36,68,1508,20,30,1518,30,23,1523,2,2,1531,29,43,1541,20,16,1553,2,2,1637,2,2,1639,87,173,1641,123,171,1648,94,116,1653,110,116,1661,49,50,1671,47,86,1676,7,7,1684,99,105,1691,50,73,1702,54,81,1706,7,7,1713,52,80,1718,5,5,1730,40,76,1737,9,13,1749,27,45,1760,22,28,1770,14,20,1781,2,2,1806,2,2,1814,47,63,1821,24,23,1830,69,95,1837,50,73];

var X0 = 497, SEL0 = 876, SEL1 = 1129;
var seed = 7;
function rnd() { seed = (seed * 16807) % 2147483647; return seed / 2147483647; }

// Returns [up, down, isPeak]: isPeak marks a column that sits on a control point.
function envelope(data, x) {
  for (var i = 0; i + 3 < data.length; i += 3) {
    if (x >= data[i] && x <= data[i + 3]) {
      var t = (x - data[i]) / ((data[i + 3] - data[i]) || 1);
      return [data[i + 1] + (data[i + 4] - data[i + 1]) * t, data[i + 2] + (data[i + 5] - data[i + 2]) * t, t === 0 || t === 1];
    }
  }
  return [0, 0, false];
}

function columns(data, cy, scale, min) {
  var out = { a: "", b: "" }, block = 1, left = 0;
  for (var x = 498; x <= 1837; x++) {
    var e = envelope(data, x), u = e[0], d = e[1], big = Math.max(u, d) > 6;
    if (left-- <= 0) { block = 0.6 + 0.4 * Math.sqrt(rnd()); left = Math.floor(rnd() * 3); }
    var ju = e[2] ? 1 : big ? block : 0.7 + 0.6 * rnd();
    var jd = e[2] ? 1 : big ? block * (0.85 + 0.15 * rnd()) : 0.7 + 0.6 * rnd();
    u = Math.max(u * ju * scale, min); d = Math.max(d * jd * scale, min);
    if (scale < 1 && u <= min && d <= min) continue;
    var seg = "M" + (x - X0 + 0.5) + " " + (cy - u).toFixed(1) + "V" + (cy + d).toFixed(1);
    if (x >= SEL0 && x < SEL1) out.b += seg; else out.a += seg;
  }
  return out;
}

var grid = "";
var selGrid = "";
function hline(y) {
  grid += "M0 " + (y + 0.5) + "H379M632 " + (y + 0.5) + "H1341";
  selGrid += "M380 " + (y + 0.5) + "H632";
}
var H = [51, 87, 112, 142, 158, 188, 204, 234, 259, 295, 397, 433, 458, 488, 504, 534, 550, 580, 605, 641, 0, 691];
H.forEach(hline);
for (var t = 0; t < 11; t++) {
  var vx = Math.round(118 + 117 * t) + 0.5;
  if (vx > 379 && vx < 632) selGrid += "M" + vx + " 0V692"; else grid += "M" + vx + " 0V692";
}

var l = columns(L, 173.5, 1, 1), r = columns(R, 519.5, 1, 1);
var wave = document.getElementById("wave");
wave.innerHTML =
  '<rect x="379" width="253" height="692" fill="#f4f5fe"/>' +
  '<path d="' + grid + '" stroke="#0c380c" fill="none"/>' +
  '<path d="' + selGrid + '" stroke="#cfe3d0" fill="none"/>' +
  '<path d="M379.500 0V692" stroke="#c0262c" fill="none"/>' +
  '<path d="' + l.a + r.a + '" stroke="#8543d9" fill="none" shape-rendering="crispEdges"/>' +
  '<path d="' + l.b + r.b + '" stroke="#362a4c" fill="none" shape-rendering="crispEdges"/>' +
  '<path d="M0 173.500H379M632 173.500H1341M0 519.500H379M632 519.500H1341" stroke="#a878e8" stroke-opacity=".45" fill="none"/>' +
  '<path d="M380 173.500H632M380 519.500H632" stroke="#24122e" fill="none"/>' +
  '<path d="M0 346.500H379M632 346.500H1341" stroke="#9a9a90" fill="none"/>' +
  '<path d="M380 346.500H632" stroke="#7a7a70" fill="none"/>' +
  '<path d="M.5 0V692M1340.500 0V692" stroke="#ccc" stroke-dasharray="2 4" fill="none"/>';

// Overview strip: same time axis, compressed amplitude.
var ol = columns(L, 7.5, 0.04, 0.5), or = columns(R, 21.5, 0.045, 0.5);
function shift(s) { return s.replace(/M([\d.]+) /g, function (m, v) { return "M" + (parseFloat(v) + 2) + " "; }); }
document.getElementById("overview").innerHTML =
  '<rect width="1345" height="30" rx="3" fill="#5a5a5a"/>' +
  '<rect x="0" y="2" width="1345" height="26" fill="#2d2d2d"/>' +
  '<rect x="380.500" y="2" width="253.500" height="26" fill="#f4f5fe"/>' +
  '<path d="M2 7.500H381M634 7.500H1343M2 21.500H381M634 21.500H1343" stroke="#a66ff5" fill="none"/>' +
  '<path d="M381 7.500H634M381 21.500H634" stroke="#3b2f55" fill="none"/>' +
  '<path d="' + shift(ol.a + or.a) + '" stroke="#a66ff5" fill="none" shape-rendering="crispEdges"/>' +
  '<path d="' + shift(ol.b + or.b) + '" stroke="#3b2f55" fill="none" shape-rendering="crispEdges"/>' +
  '<rect x="1" y="3" width="4" height="24" rx="2" fill="#333" stroke="#666"/>' +
  '<rect x="1340" y="3" width="4" height="24" rx="2" fill="#333" stroke="#666"/>';

// Ruler ticks
var rt = "";
for (var k = 0; k < 24; k++) {
  var tx = Math.round(1 + 58.5 * k) + 0.5;
  rt += "M" + tx + (k % 2 ? " 20V24" : " 17V24");
}
document.getElementById("ruler-ticks").setAttribute("d", rt);

// dB edge ticks
var dbt = "";
H.slice(0, 20).forEach(function (y) { dbt += "M0 " + (y + 0.5) + "H4"; });
[173, 519].forEach(function (y) { dbt += "M0 " + (y + 0.5) + "H4"; });
for (var y = 8; y < 692; y += 18) dbt += "M0 " + (y + 0.5) + "H2";
document.getElementById("db-ticks").setAttribute("d", dbt);

// Level meter ticks, one per dB
var lt = "";
for (var db = 0; db <= 60; db++) {
  var lx = Math.round(1126 - 18.72 * db) + 0.5;
  if (lx < 0) break;
  lt += "M" + lx + (db % 3 === 0 ? " 0V5" : " 0V2");
}
document.getElementById("lv-ticks").setAttribute("d", lt);
```
